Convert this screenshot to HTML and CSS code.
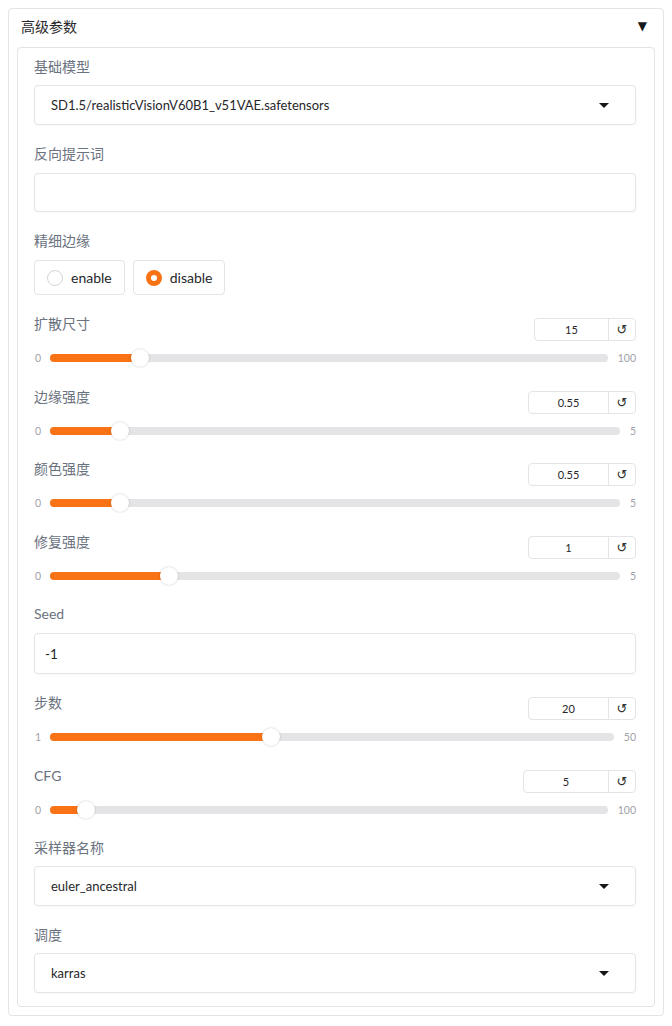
FILE: index.html
```html
<!DOCTYPE html>
<html>
<head>
<meta charset="utf-8">
<link rel="stylesheet" href="styles.css">
</head>
<body>
<div class="accordion">
  <div class="acc-header">
    <span class="acc-title">高级参数</span>
    <span class="acc-caret">▼</span>
  </div>
  <div class="panel">
    <div class="block">
      <div class="label">基础模型</div>
      <div class="dropdown"><span>SD1.5/realisticVisionV60B1_v51VAE.safetensors</span><span class="dd-arrow"></span></div>
    </div>
    <div class="block">
      <div class="label label-9">反向提示词</div>
      <div class="textbox"></div>
    </div>
    <div class="block">
      <div class="label label-9">精细边缘</div>
      <div class="radios">
        <div class="radio"><span class="dot"></span>enable</div>
        <div class="radio"><span class="dot on"></span>disable</div>
      </div>
    </div>

    <div class="block slider-block">
      <div class="s-head"><span class="label">扩散尺寸</span><div class="num"><span class="num-val w74">15</span><span class="reset">↺</span></div></div>
      <div class="s-row"><span class="s-min">0</span><div class="track" style="--v:0.15"><div class="fill"></div><div class="thumb"></div></div><span class="s-max">100</span></div>
    </div>

    <div class="block slider-block">
      <div class="s-head"><span class="label">边缘强度</span><div class="num"><span class="num-val w80">0.55</span><span class="reset">↺</span></div></div>
      <div class="s-row"><span class="s-min">0</span><div class="track" style="--v:0.11"><div class="fill"></div><div class="thumb"></div></div><span class="s-max">5</span></div>
    </div>

    <div class="block slider-block">
      <div class="s-head"><span class="label">颜色强度</span><div class="num"><span class="num-val w80">0.55</span><span class="reset">↺</span></div></div>
      <div class="s-row"><span class="s-min">0</span><div class="track" style="--v:0.11"><div class="fill"></div><div class="thumb"></div></div><span class="s-max">5</span></div>
    </div>

    <div class="block slider-block">
      <div class="s-head"><span class="label">修复强度</span><div class="num"><span class="num-val w80">1</span><span class="reset">↺</span></div></div>
      <div class="s-row"><span class="s-min">0</span><div class="track" style="--v:0.2"><div class="fill"></div><div class="thumb"></div></div><span class="s-max">5</span></div>
    </div>

    <div class="block">
      <div class="label label-9">Seed</div>
      <div class="textbox seed">-1</div>
    </div>

    <div class="block slider-block">
      <div class="s-head"><span class="label">步数</span><div class="num"><span class="num-val w80">20</span><span class="reset">↺</span></div></div>
      <div class="s-row"><span class="s-min">1</span><div class="track" style="--v:0.3878"><div class="fill"></div><div class="thumb"></div></div><span class="s-max">50</span></div>
    </div>

    <div class="block slider-block">
      <div class="s-head"><span class="label">CFG</span><div class="num"><span class="num-val w85">5</span><span class="reset">↺</span></div></div>
      <div class="s-row"><span class="s-min">0</span><div class="track" style="--v:0.05"><div class="fill"></div><div class="thumb"></div></div><span class="s-max">100</span></div>
    </div>

    <div class="block">
      <div class="label">采样器名称</div>
      <div class="dropdown"><span>euler_ancestral</span><span class="dd-arrow"></span></div>
    </div>
    <div class="block">
      <div class="label">调度</div>
      <div class="dropdown"><span>karras</span><span class="dd-arrow"></span></div>
    </div>
  </div>
</div>
</body>
</html>
```

FILE: styles.css
```css
body {
  margin: 8px;
  background: #ffffff;
  font-family: "Lato", "Noto Sans CJK SC", sans-serif;
  font-size: 14px;
  color: #1f2937;
}

.accordion {
  border: 1px solid #e4e4e7;
  border-radius: 4px;
  padding: 7px 8px 8px 8px;
  box-shadow: 0 1px 2px rgba(0,0,0,0.04);
}

.acc-header {
  display: flex;
  justify-content: space-between;
  align-items: center;
  height: 20px;
  margin-bottom: 11px;
  padding: 0 8px 0 4px;
}

.acc-title {
  font-size: 14px;
  color: #27272a;
}

.acc-caret {
  font-size: 12px;
  color: #18181b;
  font-family: "DejaVu Sans", sans-serif;
}

.panel {
  border: 1px solid #e4e4e7;
  border-radius: 4px;
  padding: 9px 18px 13px 16px;
  display: flex;
  flex-direction: column;
  gap: 19px;
}

.block {
  display: flex;
  flex-direction: column;
}

.label {
  font-size: 14px;
  line-height: 20px;
  color: #6b7280;
  margin-bottom: 8px;
}

.label-9 {
  margin-bottom: 9px;
}

.dropdown {
  height: 40px;
  box-sizing: border-box;
  border: 1px solid #e4e4e7;
  border-radius: 4px;
  display: flex;
  align-items: center;
  justify-content: space-between;
  padding: 0 26px 0 16px;
  font-size: 13px;
  color: #27272a;
  box-shadow: 0 1px 2px rgba(0,0,0,0.03);
}

.dd-arrow {
  width: 0;
  height: 0;
  border-left: 5px solid transparent;
  border-right: 5px solid transparent;
  border-top: 5px solid #18181b;
}

.textbox {
  height: 39px;
  box-sizing: border-box;
  border: 1px solid #e4e4e7;
  border-radius: 4px;
  box-shadow: 0 1px 2px rgba(0,0,0,0.03);
}

.textbox.seed {
  height: 41px;
  display: flex;
  align-items: center;
  padding-left: 10px;
  font-size: 13.5px;
  color: #27272a;
}

.radios {
  display: flex;
  gap: 8px;
}

.radio {
  height: 35px;
  box-sizing: border-box;
  border: 1px solid #e4e4e7;
  border-radius: 4px;
  display: flex;
  align-items: center;
  padding: 0 12px 0 12px;
  gap: 8px;
  font-size: 14px;
  color: #27272a;
}

.dot {
  width: 16px;
  height: 16px;
  box-sizing: border-box;
  border-radius: 50%;
  border: 1px solid #d4d4d8;
  background: #fff;
}

.dot.on {
  border: 5px solid #f97316;
  background: #fff;
}

.s-head {
  display: flex;
  justify-content: space-between;
  align-items: flex-start;
  height: 27px;
}

.s-head .label {
  margin-bottom: 0;
}

.num {
  margin-top: 4px;
  height: 23px;
  display: flex;
  border: 1px solid #e4e4e7;
  border-radius: 4px;
  box-sizing: border-box;
}

.num-val {
  display: flex;
  align-items: center;
  justify-content: center;
  font-size: 11px;
  color: #27272a;
  border-right: 1px solid #e4e4e7;
  box-sizing: border-box;
}

.w74 { width: 74px; }
.w80 { width: 80px; }
.w85 { width: 85px; }

.reset {
  width: 26px;
  display: flex;
  align-items: center;
  justify-content: center;
  font-family: "DejaVu Sans", sans-serif;
  font-size: 13px;
  color: #333;
}

.s-row {
  margin-top: 7.5px;
  height: 19px;
  display: flex;
  align-items: center;
}

.s-min {
  width: 15px;
  font-size: 10.5px;
  color: #a1a1aa;
  padding-left: 1px;
}

.s-max {
  font-size: 10.5px;
  color: #a1a1aa;
  padding-left: 10px;
}

.track {
  position: relative;
  flex: 1;
  height: 8px;
  border-radius: 4px;
  background: #e4e4e7;
}

.fill {
  position: absolute;
  left: 0;
  top: 0;
  height: 8px;
  width: calc(9px + var(--v) * (100% - 18px));
  border-radius: 4px;
  background: #f97316;
}

.thumb {
  position: absolute;
  top: -5px;
  left: calc(var(--v) * (100% - 18px));
  width: 18px;
  height: 18px;
  border-radius: 50%;
  background: #ffffff;
  box-shadow: 0 0 2px rgba(0,0,0,0.25);
}
```
